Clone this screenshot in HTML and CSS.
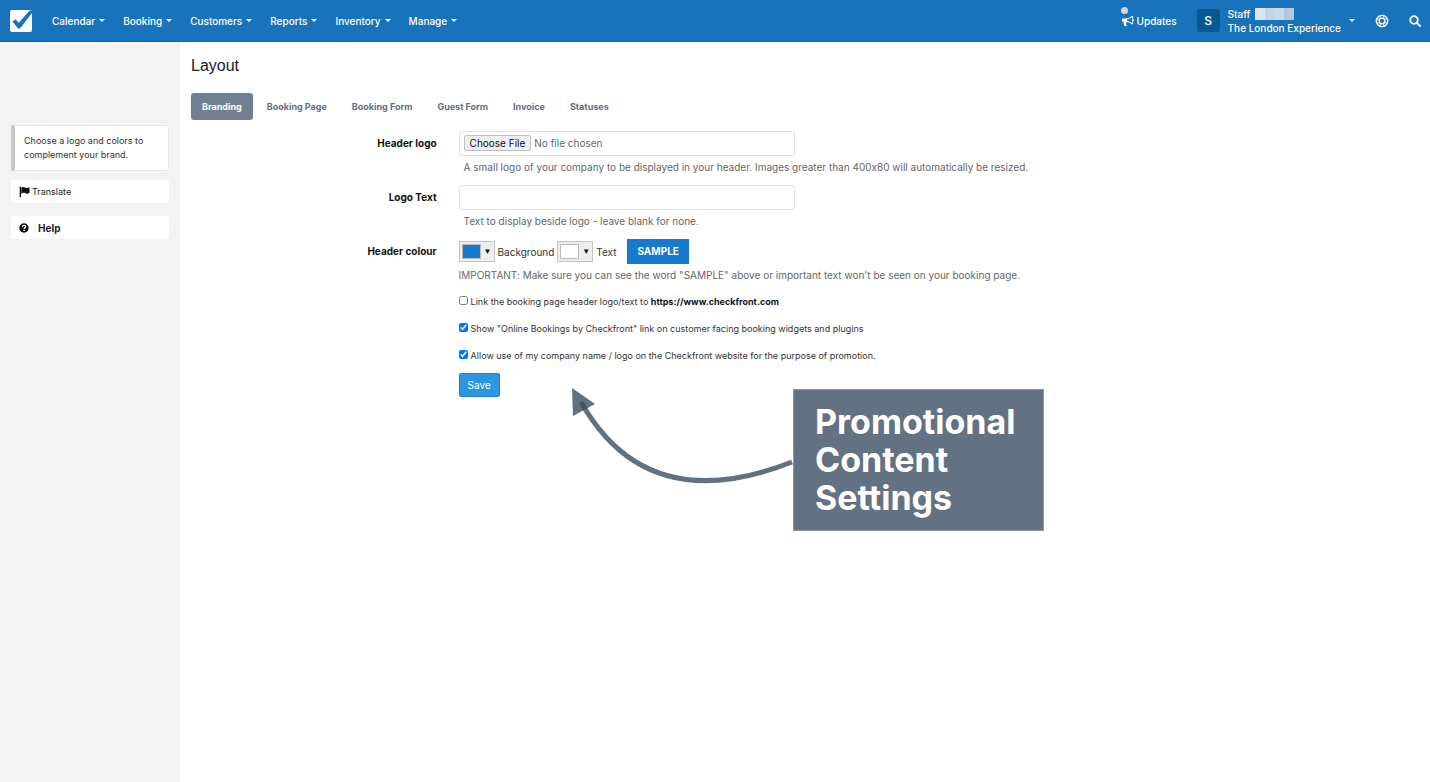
FILE: index.html
```html
<!DOCTYPE html>
<html lang="en">
  <head>
    <meta charset="UTF-8" />
    <meta name="viewport" content="width=device-width, initial-scale=1.0" />
    <title>Layout</title>
    <link rel="stylesheet" href="styles.css">
  </head>
  <body>
    <header class="topbar">
      <a class="logo" href="#" aria-label="Home">
        <svg width="24" height="24" viewBox="0 0 24 24">
          <rect x="1" y="1" width="22" height="22" rx="2" fill="#fff" />
          <path d="M3.500 12.500l3-2.200 3.300 3.500L20 2.200l3-1.200v3L11 19.500H9z" fill="#1873ba" />
        </svg>
      </a>
      <nav class="menu">
        <button type="button">Calendar <span class="caret"></span></button>
        <button type="button">Booking <span class="caret"></span></button>
        <button type="button">Customers <span class="caret"></span></button>
        <button type="button">Reports <span class="caret"></span></button>
        <button type="button">Inventory <span class="caret"></span></button>
        <button type="button">Manage <span class="caret"></span></button>
      </nav>
      <div class="tools">
        <a class="updates" href="#">
          <span class="dot"></span>
          <svg width="12" height="12" viewBox="0 0 1792 1792" fill="currentColor"><path d="M1664 640q53 0 90.500 37.500t37.500 90.500-37.500 90.500-90.500 37.500v384q0 52-38 90t-90 38q-417-347-812-380-58 19-91 66t-31 100.500 40 92.500q-20 33-23 65.500t6 58 33.500 55 48 50 61.500 50.500q-29 58-111.500 83t-168.500 11.500-132-55.500q-7-23-29.500-87.500t-32-94.500-23-89-15-101 3.500-98.500 22-110.500h-122q-66 0-113-47t-47-113v-192q0-66 47-113t113-47h480q435 0 896-384 52 0 90 38t38 90v384zm-128 604v-954q-394 302-768 343v270q377 42 768 341z" /></svg>
          Updates
        </a>
        <button type="button" class="account">
          <span class="avatar">S</span>
          <span class="who">
            <span class="staff">Staff <span class="redacted"></span></span>
            <span>The London Experience</span>
          </span>
          <span class="caret"></span>
        </button>
        <a class="tool" href="#" aria-label="Support">
          <svg width="14" height="14" viewBox="0 0 14 14" fill="none" stroke="#fff"><circle cx="7" cy="7" r="5.700" stroke-width="1.300" /><circle cx="7" cy="7" r="2.800" stroke-width="1.300" /><path d="M5.200 1.500v3.200M8.800 1.500v3.200M5.200 9.300v3.200M8.800 9.300v3.200M1.500 5.200h3.200M1.500 8.800h3.200M9.300 5.200h3.200M9.300 8.800h3.200" stroke-width=".9" /></svg>
        </a>
        <a class="tool" href="#" aria-label="Search">
          <svg width="12" height="12" viewBox="0 0 12 12" fill="none" stroke="#fff"><circle cx="5" cy="5" r="3.800" stroke-width="1.800" /><path d="M8 8l3 3" stroke-width="2" stroke-linecap="round" /></svg>
        </a>
      </div>
    </header>

    <div class="page">
      <aside class="sidebar">
        <p class="info">Choose a logo and colors to complement your brand.</p>
        <a class="side-link" href="#">
          <svg width="11" height="11" viewBox="0 0 11 11" fill="#111"><path d="M1 .5a1 1 0 0 1 1 1V11H.7V2A1 1 0 0 1 1 .5zM2.300 1.800C4 .6 5.200 1.200 6.500 1.800c1.200.5 2.500.2 4-.6v5.600c-1.500.9-2.800 1.100-4.100.5C5 6.600 4 6.600 2.300 7.700z" /></svg>
          Translate
        </a>
        <a class="side-link help" href="#">
          <svg width="10" height="10" viewBox="0 0 10 10"><circle cx="5" cy="5" r="4.700" fill="#111" /><path d="M3.300 3.800C3.500 2.700 4.200 2.300 5 2.300c1 0 1.700.6 1.700 1.400C6.700 4.800 5.100 4.700 5.100 6" fill="none" stroke="#fff" stroke-width="1.300" /><rect x="4.400" y="6.700" width="1.400" height="1.300" fill="#fff" /></svg>
          Help
        </a>
      </aside>

      <main class="content">
        <h1>Layout</h1>
        <nav class="tabs">
          <a class="active" href="#">Branding</a>
          <a href="#">Booking Page</a>
          <a href="#">Booking Form</a>
          <a href="#">Guest Form</a>
          <a href="#">Invoice</a>
          <a href="#">Statuses</a>
        </nav>

        <form class="form">
          <label class="name" for="headerLogo">Header logo</label>
          <div class="field">
            <input class="control" type="file" id="headerLogo" />
            <p class="hint indent">A small logo of your company to be displayed in your header. Images greater than 400x80 will automatically be resized.</p>
          </div>

          <label class="name" for="logoText">Logo Text</label>
          <div class="field">
            <input class="control" type="text" id="logoText" />
            <p class="hint indent">Text to display beside logo - leave blank for none.</p>
          </div>

          <span class="name">Header colour</span>
          <div class="field">
            <div class="colours">
              <button type="button" class="picker" id="bgColour"><span class="swatch blue"></span>▼</button>
              <label for="bgColour">Background</label>
              <button type="button" class="picker" id="textColour"><span class="swatch"></span>▼</button>
              <label for="textColour">Text</label>
              <strong class="sample">SAMPLE</strong>
            </div>
            <p class="hint">IMPORTANT: Make sure you can see the word "SAMPLE" above or important text won't be seen on your booking page.</p>
            <div class="checks">
              <label><input type="checkbox" /><span>Link the booking page header logo/text to <b>https://www.checkfront.com</b></span></label>
              <label><input type="checkbox" checked /><span>Show "Online Bookings by Checkfront" link on customer facing booking widgets and plugins</span></label>
              <label><input type="checkbox" checked /><span>Allow use of my company name / logo on the Checkfront website for the purpose of promotion.</span></label>
            </div>
            <button class="save" type="submit">Save</button>
          </div>
        </form>

        <div class="callout">
          <svg width="223" height="98" viewBox="570 389 223 98">
            <path d="M581 402Q647 519 792 462" fill="none" stroke="#3b4e60" stroke-width="5" opacity=".8" />
            <path d="M572 388l23 16-22 12z" fill="#3b4e60" opacity=".8" />
          </svg>
          <p>Promotional Content Settings</p>
        </div>
      </main>
    </div>
  </body>
</html>
```

FILE: styles.css
```css
* {
  box-sizing: border-box;
}

body {
  margin: 0;
  min-height: 100vh;
  display: flex;
  flex-direction: column;
  background-color: #fff;
  color: #333;
  font-family: Inter, "Liberation Sans", sans-serif;
  font-size: 10px;
  font-variant-ligatures: no-contextual;
}

a {
  color: inherit;
  text-decoration: none;
}

button,
input {
  font: inherit;
}

svg {
  display: block;
  flex: none;
}

h1,
p {
  margin: 0;
}

.topbar {
  display: flex;
  align-items: center;
  height: 42px;
  padding: 0 9px;
  background-color: #1873ba;
  border-bottom: 1px solid #0a62a9;
  color: #fff;
}

.topbar button {
  display: flex;
  align-items: center;
  padding: 0;
  border: none;
  background: none;
  color: #fff;
  font-weight: 500;
  cursor: pointer;
}

.menu {
  display: flex;
  gap: 18px;
  margin-left: 19px;
}

.menu button {
  gap: 4px;
}

.caret {
  border: 3px solid transparent;
  border-top-color: #fff;
  border-bottom: none;
}

.tools {
  display: flex;
  align-items: center;
  margin-left: auto;
}

.updates {
  position: relative;
  display: flex;
  align-items: center;
  gap: 3px;
  font-weight: 500;
}

.dot {
  position: absolute;
  left: -1px;
  top: -8px;
  width: 7px;
  height: 7px;
  border-radius: 50%;
  background-color: #d5d5d8;
}

.account {
  margin-left: 20px;
}

.avatar {
  width: 23px;
  height: 23px;
  border-radius: 3px;
  background-color: #075994;
  font-size: 12px;
  line-height: 23px;
}

.who {
  display: flex;
  flex-direction: column;
  margin: 0 8px;
  line-height: 14px;
  text-align: left;
}

.staff {
  display: flex;
  align-items: center;
  gap: 5px;
}

.redacted {
  width: 39px;
  height: 12px;
  background: linear-gradient(90deg, #dbe5f0 25%, #c5d4e5 25% 50%, #c6dce5 50% 75%, #b5c6dd 75%);
}

.tool {
  margin-left: 20px;
}

.page {
  flex: 1;
  display: flex;
}

.sidebar {
  width: 180px;
  padding: 83px 11px 0;
  background-color: #f3f3f3;
}

.info {
  padding: 8px 9px;
  border: 1px solid #e5e5e5;
  border-left: 4px solid #c8c8c8;
  border-radius: 0 3px 3px 0;
  background-color: #fff;
  font-size: 9px;
  line-height: 14px;
}

.side-link {
  display: flex;
  align-items: center;
  gap: 2px;
  height: 23px;
  margin-top: 9px;
  padding: 0 8px;
  border-radius: 3px;
  background-color: #fff;
  color: #222;
  font-size: 9px;
}

.side-link.help {
  gap: 9px;
  margin-top: 13px;
  font-size: 10px;
  font-weight: bold;
}

.content {
  position: relative;
  flex: 1;
  padding: 14px 11px;
}

h1 {
  color: #16202e;
  font-family: "Liberation Sans", Arial, sans-serif;
  font-size: 16px;
  font-weight: normal;
  line-height: 20px;
}

.tabs {
  display: flex;
  gap: 3px;
  margin-top: 17px;
  color: #5d6f86;
  font-size: 9px;
  font-weight: bold;
  line-height: 27px;
}

.tabs a {
  padding: 0 11px;
  border-radius: 3px;
}

.tabs .active {
  background-color: #708090;
  color: #fff;
}

.form {
  display: grid;
  grid-template-columns: 20% 1fr;
  column-gap: 22px;
  margin-top: 11px;
}

.name {
  color: #111;
  font-weight: bold;
  line-height: 25px;
  text-align: right;
}

.control {
  display: block;
  width: 35%;
  height: 25px;
  padding: 3px 4px;
  border: 1px solid #e0e0e0;
  border-radius: 3px;
  background-color: #fff;
  color: #666;
}

.control::file-selector-button {
  height: 16px;
  margin-right: 3px;
  padding: 0 5px;
  border: 1px solid #c0c0c0;
  border-radius: 2px;
  background-color: #efefef;
  color: #111;
  font: inherit;
}

.hint {
  color: #666;
  line-height: 22px;
}

.hint.indent {
  padding: 0 5px;
  margin-bottom: 7px;
}

.colours {
  display: flex;
  align-items: center;
  gap: 3px;
  height: 25px;
}

.picker {
  display: flex;
  align-items: center;
  gap: 3px;
  height: 21px;
  padding: 2px;
  border: 1px solid #c8c4bc;
  background-color: #eee;
  color: #111;
  font-family: "Liberation Sans", Arial, sans-serif;
  font-size: 8px;
}

.swatch {
  width: 19px;
  height: 15px;
  border: 1px solid #bbb;
  background-color: #fff;
}

.swatch.blue {
  background-color: #167bce;
}

.sample {
  margin-left: 8px;
  padding: 0 10px;
  background-color: #167bce;
  color: #fff;
  font-size: 10px;
  line-height: 25px;
}

.checks {
  display: flex;
  flex-direction: column;
  gap: 13px;
  margin-top: 9px;
}

.checks label {
  display: flex;
  gap: 3px;
  font-size: 9px;
  line-height: 14px;
}

.checks input {
  width: 9px;
  height: 9px;
  margin: 1px 0 0;
}

.checks b {
  color: #111;
}

.save {
  height: 24px;
  margin-top: 10px;
  padding: 0 8px;
  border: 1px solid #1c86d2;
  border-radius: 2px;
  background-color: #2d96e0;
  color: #fff;
  cursor: pointer;
}

/* note laid over the form */
.callout {
  position: absolute;
  left: 390px;
  top: 347px;
  display: flex;
}

.callout svg {
  overflow: visible;
}

.callout p {
  width: 251px;
  padding: 13px 21px;
  border: 1px solid #8b99a6;
  background-color: #637282;
  color: #fff;
  font-size: 34px;
  font-weight: bold;
  line-height: 38px;
}
```
